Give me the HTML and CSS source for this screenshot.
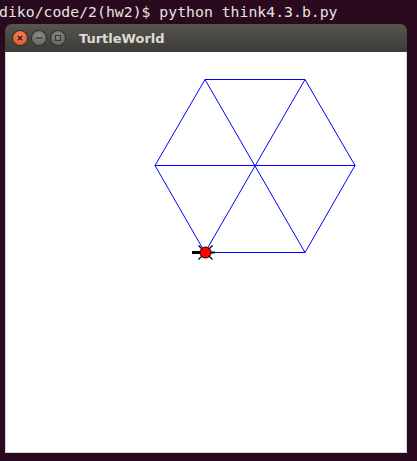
FILE: index.html
```html
<!DOCTYPE html>
<html>
<head>
<meta charset="utf-8">
<link rel="stylesheet" href="styles.css">
</head>
<body>
<div class="term">diko/code/2(hw2)$ python think4.3.b.py</div>
<div class="window">
  <div class="titlebar">
    <div class="buttons">
      <span class="btn close"><svg width="14" height="14" viewBox="0 0 14 14"><path d="M4.8 4.8 L9.2 9.2 M9.2 4.8 L4.8 9.2" stroke="#3a1a0e" stroke-width="1.4"/></svg></span>
      <span class="btn"><svg width="14" height="14" viewBox="0 0 14 14"><path d="M4 7 H10" stroke="#3b3a36" stroke-width="1.4"/></svg></span>
      <span class="btn"><svg width="14" height="14" viewBox="0 0 14 14"><rect x="4.5" y="4.5" width="5" height="5" fill="none" stroke="#3b3a36" stroke-width="1.2"/></svg></span>
    </div>
    <div class="title">TurtleWorld</div>
  </div>
  <div class="canvas">
    <svg width="400" height="401" viewBox="6 52 400 401">
      <g stroke="#0000ff" stroke-width="1" fill="none">
        <path d="M205 79.5 H305 L355 165.5 L305 252.5 H205 L155 165.5 Z"/>
        <path d="M155 165.5 H355"/>
        <path d="M205 79.5 L305 252.5"/>
        <path d="M305 79.5 L205 252.5"/>
      </g>
      <g stroke="#000" stroke-width="1.2">
        <path d="M198.5 245.5 L212.5 259.5 M212.5 245.5 L198.5 259.5"/>
      </g>
      <path d="M192 252.5 H200" stroke="#000" stroke-width="3"/>
      <path d="M210 252.5 H215" stroke="#000" stroke-width="2"/>
      <circle cx="205.5" cy="252.5" r="5.5" fill="#ff0000" stroke="#000" stroke-width="1"/>
    </svg>
  </div>
</div>
</body>
</html>
```
FILE: styles.css
```css
html, body {
  margin: 0;
  padding: 0;
}
body {
  background: #2a0a1f;
  width: 417px;
  height: 461px;
  overflow: hidden;
}
.term {
  font-family: "DejaVu Sans Mono", "Liberation Mono", monospace;
  font-size: 14.8px;
  line-height: 22px;
  height: 22px;
  color: #e6e3e0;
  white-space: pre;
  margin-left: -1px;
  margin-top: 1px;
}
.window {
  margin-left: 5px;
  margin-top: 1px;
  width: 402px;
}
.titlebar {
  height: 28px;
  border-radius: 7px 7px 0 0;
  background: linear-gradient(#56554f, #3c3b37);
  display: flex;
  align-items: center;
  box-sizing: border-box;
  padding-left: 8px;
}
.buttons {
  display: flex;
  gap: 5px;
}
.btn {
  width: 14px;
  height: 14px;
  border-radius: 50%;
  background: radial-gradient(circle at 50% 35%, #8d8c86, #5c5b56);
  box-shadow: 0 0 0 1px #2e2d2a;
  display: block;
}
.btn svg { display: block; }
.btn.close {
  background: radial-gradient(circle at 50% 35%, #f7885a, #dd4b19);
}
.title {
  font-family: "DejaVu Sans", "Liberation Sans", sans-serif;
  font-weight: bold;
  font-size: 13px;
  color: #dfdbd2;
  margin-left: 14px;
  margin-top: 1px;
}
.canvas {
  background: #fff;
  border: 1px solid #d6d4d2;
  border-top: none;
  height: 400px;
  box-sizing: content-box;
  width: 400px;
}
.canvas svg { display: block; }
```
